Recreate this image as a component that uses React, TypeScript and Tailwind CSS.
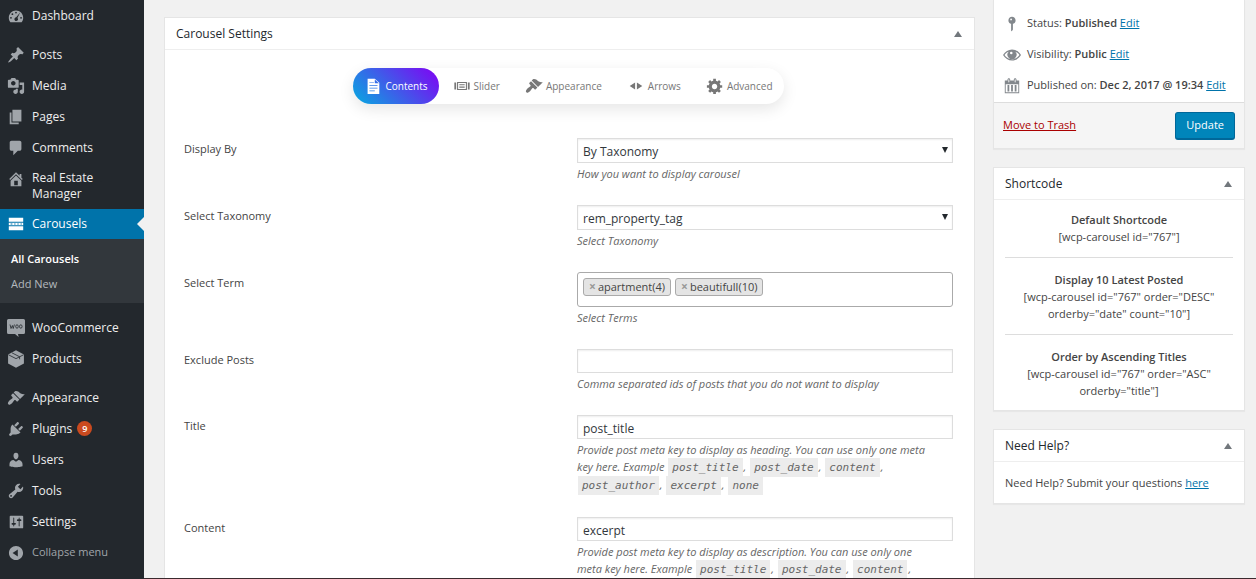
import type { ReactNode } from "react";

type IconProps = { className?: string; children: ReactNode };

function Icon({ className = "size-[18px]", children }: IconProps) {
  return (
    <svg viewBox="0 0 20 20" fill="currentColor" fillRule="evenodd" aria-hidden="true" className={`shrink-0 ${className}`}>
      {children}
    </svg>
  );
}

const icons = {
  dashboard: (
    <path d="M3.76 17h12.48c1.1-1.37 1.76-3.11 1.76-5 0-4.42-3.58-8-8-8s-8 3.58-8 8c0 1.89.66 3.63 1.76 5zM10 5.2a1 1 0 1 1 0 2 1 1 0 0 1 0-2zM6 7a1 1 0 1 1 0 2 1 1 0 0 1 0-2zM14.8 5.9l-3.2 6.4c.7.6.9 1.7.3 2.5-.7.9-2 1.1-2.9.4s-1-2-.3-2.9c.4-.5.9-.7 1.5-.8zM4.4 11a1 1 0 1 1 0 2 1 1 0 0 1 0-2zM15.6 11a1 1 0 1 1 0 2 1 1 0 0 1 0-2z" />
  ),
  post: (
    <path d="M10.44 3.02l1.82-1.82 6.36 6.35-1.83 1.82c-1.05-.68-2.48-.57-3.41.36l-.75.75c-.92.93-1.04 2.35-.35 3.41l-1.83 1.82-2.41-2.41-2.8 2.79c-.42.42-3.38 2.71-3.8 2.29s1.86-3.39 2.28-3.81l2.79-2.79L4.1 9.36l1.83-1.82c1.05.69 2.48.57 3.4-.36l.75-.75c.93-.92 1.05-2.35.36-3.41z" />
  ),
  media: (
    <path d="M13 11V4c0-.55-.45-1-1-1h-1.67L9 1H5L3.67 3H2c-.55 0-1 .45-1 1v7c0 .55.45 1 1 1h10c.55 0 1-.45 1-1zM7 4.5c1.38 0 2.5 1.12 2.5 2.5S8.38 9.5 7 9.5 4.5 8.38 4.5 7 5.62 4.5 7 4.5zM14 6h5v10.5c0 1.38-1.12 2.5-2.5 2.5S14 17.88 14 16.5s1.12-2.5 2.5-2.5c.17 0 .34.02.5.05V9h-3V6zm-4 8.05V13h2v3.5c0 1.38-1.12 2.5-2.5 2.5S7 17.88 7 16.5 8.12 14 9.5 14c.17 0 .34.02.5.05z" />
  ),
  page: <path d="M6 15V2h10v13H6zm-1 1h8v2H3V5h2v11z" />,
  comments: (
    <path d="M5 2h9c1.1 0 2 .9 2 2v7c0 1.1-.9 2-2 2h-2l-5 5v-5H5c-1.1 0-2-.9-2-2V4c0-1.1.9-2 2-2z" />
  ),
  home: (
    <path d="M16 8.5l1.53 1.53-1.06 1.06L10 4.6l-6.47 6.49-1.06-1.06L10 2.5l4 4v-2h2v4zm-6-2.46l6 5.99V18H4v-5.97zM12 17v-5H8v5h4z" />
  ),
  carousels: (
    <path d="M2 3h16v4.500H2zM2 8.500h16v3H2zM4 9.500v1h2v-1zM8 9.500v1h1.500v-1zM11.500 9.500v1H13v-1zM15 9.500v1h1.500v-1zM2 12.500h16V17H2z" />
  ),
  products: (
    <>
      <path d="M10 .4l8.800 4.600v10L10 19.800 1.200 15V5z" />
      <path d="M1.600 5.300L10 9.600l8.400-4.300M5.600 3.200l8.400 4.300v2.800" fill="none" stroke="#23282d" strokeWidth="0.900" />
    </>
  ),
  appearance: (
    <path d="M14.48 11.06L7.41 3.99l1.5-1.5c.5-.56 2.3-.47 3.51.32 1.21.8 1.43 1.28 2.91 2.1 1.18.64 2.45 1.26 4.45.85zm-.71.71L6.7 4.7 4.93 6.47c-.39.39-.39 1.02 0 1.41l1.06 1.06c.39.39.39 1.03 0 1.42-.6.6-1.43 1.11-2.21 1.69-.35.26-.7.53-1.01.84C1.43 14.23.4 16.08 1.4 17.07c.99 1 2.84-.03 4.18-1.36.31-.31.58-.66.85-1.02.57-.78 1.08-1.61 1.69-2.21.39-.39 1.02-.39 1.41 0l1.06 1.06c.39.39 1.02.39 1.41 0z" />
  ),
  plugins: (
    <path d="M13.11 4.36L9.87 7.6 8 5.73l3.24-3.24c.35-.34 1.05-.2 1.56.32.52.51.66 1.21.31 1.55zm-8 1.77l.91-1.12 9.01 9.01-1.19.84c-.71.71-2.63 1.16-3.82 1.16H6.14L4.9 17.26c-.59.59-1.54.59-2.12 0-.59-.58-.59-1.53 0-2.12l1.24-1.24v-3.88c0-1.13.4-3.19 1.09-3.89zm7.26 3.97l3.24-3.24c.34-.35 1.04-.21 1.55.31.52.51.66 1.21.31 1.55l-3.24 3.25z" />
  ),
  users: (
    <path d="M10 9.25c-2.27 0-2.73-3.44-2.73-3.44C7 4.02 7.82 2 9.97 2c2.16 0 2.98 2.02 2.71 3.81 0 0-.41 3.44-2.68 3.44zm0 2.57L12.72 10c2.39 0 4.52 2.33 4.52 4.53v2.49s-3.65 1.13-7.24 1.13c-3.65 0-7.24-1.13-7.24-1.13v-2.49c0-2.25 1.94-4.48 4.47-4.48z" />
  ),
  tools: (
    <path d="M16.68 9.77c-1.34 1.34-3.3 1.67-4.95.99l-5.41 6.52c-.99.99-2.59.99-3.58 0s-.99-2.59 0-3.57l6.52-5.42c-.68-1.65-.35-3.61.99-4.95 1.28-1.28 3.12-1.62 4.72-1.06l-2.89 2.89 2.82 2.82 2.86-2.87c.53 1.58.18 3.39-1.08 4.65zM3.81 16.21c.4.39 1.04.39 1.43 0 .4-.4.4-1.04 0-1.43-.39-.4-1.03-.4-1.43 0-.39.39-.39 1.03 0 1.43z" />
  ),
  settings: (
    <path d="M18 16V4c0-.55-.45-1-1-1H4c-.55 0-1 .45-1 1v12c0 .55.45 1 1 1h13c.55 0 1-.45 1-1zM8 11h1c.55 0 1 .45 1 1s-.45 1-1 1H8v1.5c0 .28-.22.5-.5.5s-.5-.22-.5-.5V13H6c-.55 0-1-.45-1-1s.45-1 1-1h1V5.5c0-.28.22-.5.5-.5s.5.22.5.5V11zm5-2h-1c-.55 0-1-.45-1-1s.45-1 1-1h1V5.5c0-.28.22-.5.5-.5s.5.22.5.5V7h1c.55 0 1 .45 1 1s-.45 1-1 1h-1v5.5c0 .28-.22.5-.5.5s-.5-.22-.5-.5V9z" />
  ),
  collapse: (
    <path d="M10 2.16c4.33 0 7.84 3.51 7.84 7.84s-3.51 7.84-7.84 7.84S2.16 14.33 2.16 10 5.71 2.16 10 2.16zm2 11.72V6.12L6.18 9.97z" />
  ),
  gear: (
    <path d="M18 12h-2.18c-.17.7-.44 1.35-.81 1.93l1.54 1.54-2.1 2.1-1.54-1.54c-.58.36-1.23.63-1.91.79V19H8v-2.18c-.68-.16-1.33-.43-1.91-.79l-1.54 1.54-2.12-2.12 1.54-1.54c-.36-.58-.63-1.23-.79-1.91H1V9.03h2.17c.16-.7.44-1.35.8-1.94L2.43 5.55l2.1-2.1 1.54 1.54c.58-.37 1.24-.64 1.93-.81V2h3v2.18c.68.16 1.33.43 1.91.79l1.54-1.54 2.12 2.12-1.54 1.54c.36.59.64 1.24.8 1.94H18V12zm-8.5 1.5c1.66 0 3-1.34 3-3s-1.34-3-3-3-3 1.34-3 3 1.34 3 3 3z" />
  ),
  arrows: <path d="M3 10.03L9 6v8zM11 6l6 4.03L11 14V6z" />,
  slider: (
    <path d="M1.500 6h2v8h-2zM16.500 6h2v8h-2zM4.500 5.500h11v9h-11zM5.700 6.700v6.600h8.600V6.700zM7 8h6v1.200H7zM7 10.600h6V12H7z" />
  ),
  document: (
    <path d="M4 2h8l5 4.500V19H4zM12 2.800V7h4.500zM6 6v.8h5V6zM6 9v.8h9V9zM6 12v.8h9V12zM6 15v.8h6V15z" />
  ),
  pin: (
    <path d="M14 6c0 1.860-1.280 3.410-3 3.860V16c0 1-2 2-2 2V9.860c-1.720-.45-3-2-3-3.860 0-2.210 1.790-4 4-4s4 1.790 4 4zM8 5c0 .55.45 1 1 1s1-.45 1-1-.45-1-1-1-1 .45-1 1z" />
  ),
  eye: (
    <path d="M10 3.800c4 0 7.700 2.300 10 6.200-2.300 3.900-6 6.200-10 6.200S2.300 13.900 0 10c2.300-3.900 6-6.200 10-6.200zM6.300 6.300C4.300 7 2.700 8.300 1.700 10c1.800 2.900 4.900 4.700 8.300 4.700s6.500-1.800 8.300-4.700c-1-1.700-2.600-3-4.600-3.700a5 5 0 1 1-7.400 0zM9.200 6.300a1.400 1.400 0 1 0 0 2.800 1.400 1.400 0 0 0 0-2.800z" />
  ),
  calendar: (
    <path d="M15 4h3v14H2V4h3V3c0-.83.67-1.500 1.500-1.500S8 2.170 8 3v1h4V3c0-.83.67-1.500 1.500-1.500S15 2.170 15 3v1zM6 3v2.500c0 .28.22.5.5.5s.5-.22.5-.5V3c0-.28-.22-.5-.5-.5S6 2.720 6 3zm7 0v2.500c0 .28.22.5.5.5s.5-.22.5-.5V3c0-.28-.22-.5-.5-.5s-.5.22-.5.5zm4 14V8H3v9h14zM7 16V9H5v7h2zm4 0V9H9v7h2zm4 0V9h-2v7h2z" />
  ),
};

function WooBadge() {
  return (
    <svg viewBox="0 0 18 18" aria-hidden="true" className="size-[18px] shrink-0">
      <path
        d="M1.500 0h15A1.500 1.500 0 0 1 18 1.500v12a1.500 1.500 0 0 1-1.500 1.500H11l.6 3-3.600-3H1.500A1.500 1.500 0 0 1 0 13.500v-12A1.500 1.500 0 0 1 1.500 0z"
        fill="#9ea3a8"
      />
      <path d="M3 5.500l1 4 1.400-3 .8 3L7.400 5.500" fill="none" stroke="#23282d" strokeWidth="0.800" />
      <ellipse cx="10" cy="7.500" rx="1.300" ry="1.700" fill="none" stroke="#23282d" strokeWidth="0.800" />
      <ellipse cx="13.800" cy="7.500" rx="1.300" ry="1.700" fill="none" stroke="#23282d" strokeWidth="0.800" />
    </svg>
  );
}

type MenuItemProps = { icon: ReactNode; label: string; badge?: string; tall?: boolean };

function MenuItem({ icon, label, badge, tall }: MenuItemProps) {
  const height = tall ? "h-[46px] items-start pt-[7px]" : "h-[31px] items-center";
  return (
    <a href="#" className={`flex gap-[7px] pl-[7px] pr-4 text-xs leading-4 text-[#eee] ${height}`}>
      <span className="text-[#a0a5aa]">{icon}</span>
      <span>{label}</span>
      {badge && (
        <span className="-ml-[2px] flex size-[15px] items-center justify-center rounded-full bg-[#ca4a1f] text-[9px] font-semibold text-white">
          {badge}
        </span>
      )}
    </a>
  );
}

function Sidebar() {
  return (
    <nav className="flex w-36 shrink-0 flex-col bg-[#23282d]" aria-label="Admin menu">
      <MenuItem icon={<Icon>{icons.dashboard}</Icon>} label="Dashboard" />
      <div className="mt-2">
        <MenuItem icon={<Icon>{icons.post}</Icon>} label="Posts" />
        <MenuItem icon={<Icon>{icons.media}</Icon>} label="Media" />
        <MenuItem icon={<Icon>{icons.page}</Icon>} label="Pages" />
        <MenuItem icon={<Icon>{icons.comments}</Icon>} label="Comments" />
        <MenuItem icon={<Icon>{icons.home}</Icon>} label="Real Estate Manager" tall />
      </div>
      <a href="#" className="flex h-[30px] items-center gap-[7px] bg-[#0073aa] pl-[7px] text-xs leading-4 text-white">
        <Icon>{icons.carousels}</Icon>
        <span>Carousels</span>
        <span className="ml-auto border-y-[7px] border-r-[7px] border-y-transparent border-r-[#f1f1f1]" />
      </a>
      <div className="flex flex-col bg-[#32373c] px-[11px] py-[7px] text-[11px] leading-[25px]">
        <a href="#" className="font-semibold text-white">
          All Carousels
        </a>
        <a href="#" className="text-[#b4b9be]">
          Add New
        </a>
      </div>
      <div className="mt-[9px]">
        <MenuItem icon={<WooBadge />} label="WooCommerce" />
        <MenuItem icon={<Icon>{icons.products}</Icon>} label="Products" />
      </div>
      <div className="mt-2">
        <MenuItem icon={<Icon>{icons.appearance}</Icon>} label="Appearance" />
        <MenuItem icon={<Icon>{icons.plugins}</Icon>} label="Plugins" badge="9" />
        <MenuItem icon={<Icon>{icons.users}</Icon>} label="Users" />
        <MenuItem icon={<Icon>{icons.tools}</Icon>} label="Tools" />
        <MenuItem icon={<Icon>{icons.settings}</Icon>} label="Settings" />
      </div>
      <button type="button" className="flex h-[31px] items-center gap-[7px] pl-[7px] text-[11px] text-[#a0a5aa]">
        <Icon>{icons.collapse}</Icon>
        <span>Collapse menu</span>
      </button>
    </nav>
  );
}

function Panel({ title, children }: { title: string; children: ReactNode }) {
  return (
    <section className="border border-[#e5e5e5] bg-white shadow-[0_1px_1px_rgba(0,0,0,0.04)]">
      <header className="flex h-8 items-center justify-between border-b border-[#eee] pl-[11px] pr-3">
        <h2 className="text-xs font-medium text-[#23282d]">{title}</h2>
        <button type="button" aria-label={`Toggle ${title}`}>
          <span className="block border-x-4 border-b-[6px] border-x-transparent border-b-[#72777c]" />
        </button>
      </header>
      {children}
    </section>
  );
}

const tabs = [
  { label: "Slider", icon: icons.slider },
  { label: "Appearance", icon: icons.appearance },
  { label: "Arrows", icon: icons.arrows },
  { label: "Advanced", icon: icons.gear },
];

function Tabs() {
  return (
    <div role="tablist" className="flex h-9 rounded-full bg-white text-[10px] text-[#777] shadow-[0_5px_15px_rgba(0,0,0,0.1)]">
      <button
        type="button"
        role="tab"
        aria-selected="true"
        className="flex items-center gap-[3px] rounded-full bg-linear-45/srgb from-[#05abe0] to-[#8200f4] px-[11px] text-white"
      >
        <Icon>{icons.document}</Icon>
        Contents
      </button>
      {tabs.map((tab) => (
        <button key={tab.label} type="button" role="tab" aria-selected="false" className="flex items-center gap-[3px] pl-[14px] pr-[11px]">
          <Icon>{tab.icon}</Icon>
          {tab.label}
        </button>
      ))}
    </div>
  );
}

function Field({ id, label, help, children }: { id: string; label: string; help: ReactNode; children: ReactNode }) {
  return (
    <div className="grid grid-cols-[minmax(0,393fr)_minmax(0,376fr)]">
      <label htmlFor={id} className="pt-[2px] leading-[17px] text-[#444]">
        {label}
      </label>
      <div>
        {children}
        <p className="mt-[2px] leading-[17px] text-[#666] italic">{help}</p>
      </div>
    </div>
  );
}

function Dropdown({ id, value }: { id: string; value: string }) {
  return (
    <div className="relative">
      <select
        id={id}
        defaultValue={value}
        className="block h-[25px] w-full appearance-none border border-[#ddd] bg-white px-[5px] pt-[2px] text-xs text-[#32373c] shadow-[inset_0_1px_2px_rgba(0,0,0,0.07)]"
      >
        <option>{value}</option>
      </select>
      <span className="pointer-events-none absolute top-[9px] right-[5px] border-x-[3px] border-t-[6px] border-x-transparent border-t-[#23282d]" />
    </div>
  );
}

function TextBox({ id, value = "" }: { id: string; value?: string }) {
  return (
    <input
      id={id}
      type="text"
      defaultValue={value}
      className="block h-6 w-full border border-[#ddd] bg-white px-[5px] pt-[2px] text-xs text-[#32373c] shadow-[inset_0_1px_2px_rgba(0,0,0,0.07)]"
    />
  );
}

function Tag({ label }: { label: string }) {
  return (
    <span className="flex h-[18px] items-center gap-[2px] rounded-[3px] border border-[#aaa] bg-[#e4e4e4] px-[5px] text-[#444]">
      <button type="button" aria-label={`Remove ${label}`} className="text-xs font-bold text-[#999]">
        ×
      </button>
      {label}
    </span>
  );
}

const metaKeys = ["post_title", "post_date", "content", "post_author", "excerpt", "none"];

function MetaHelp({ intro }: { intro: string }) {
  return (
    <>
      {intro} Example{" "}
      {metaKeys.map((key, i) => (
        <span key={key}>
          <code className="mx-px bg-[#ececec] px-1 py-[3px] font-['DejaVu_Sans_Mono',monospace] text-[11px]">{key}</code>
          {i < metaKeys.length - 1 && ", "}
        </span>
      ))}
    </>
  );
}

function EditLink({ children = "Edit" }: { children?: ReactNode }) {
  return (
    <a href="#" className="text-[#0073aa] underline">
      {children}
    </a>
  );
}

function StatusRow({ icon, label, value }: { icon: ReactNode; label: string; value: string }) {
  return (
    <p className="flex h-[31px] items-center gap-[6px]">
      <span className="text-[#82878c]">
        <Icon>{icon}</Icon>
      </span>
      <span className="whitespace-nowrap">
        {label}: <strong className="font-semibold">{value}</strong> <EditLink />
      </span>
    </p>
  );
}

const shortcodes = [
  { title: "Default Shortcode", code: '[wcp-carousel id="767"]' },
  { title: "Display 10 Latest Posted", code: '[wcp-carousel id="767" order="DESC" orderby="date" count="10"]' },
  { title: "Order by Ascending Titles", code: '[wcp-carousel id="767" order="ASC" orderby="title"]' },
];

export default function App() {
  return (
    <div className="flex h-screen overflow-hidden bg-[#f1f1f1] font-['Open_Sans','Noto_Sans',sans-serif] text-[11px] text-[#444]">
      <Sidebar />
      <div className="flex flex-1 gap-[18px] border-b border-[#3a2a2e] pr-[11px] pl-5">
        <main className="min-h-0 flex-1 overflow-hidden pt-[17px]">
          <Panel title="Carousel Settings">
            <div className="pt-[18px] pr-[21px] pl-[19px]">
              <div className="flex justify-center">
                <Tabs />
              </div>
              <form className="mt-[34px] flex flex-col gap-[23px] pb-6">
                <Field id="display-by" label="Display By" help="How you want to display carousel">
                  <Dropdown id="display-by" value="By Taxonomy" />
                </Field>
                <Field id="taxonomy" label="Select Taxonomy" help="Select Taxonomy">
                  <Dropdown id="taxonomy" value="rem_property_tag" />
                </Field>
                <Field id="term" label="Select Term" help="Select Terms">
                  <div className="flex h-[35px] items-start gap-1 rounded-[3px] border border-[#aaa] px-[5px] pt-[5px]">
                    <Tag label="apartment(4)" />
                    <Tag label="beautifull(10)" />
                    <input id="term" type="text" className="h-[18px] min-w-0 flex-1 outline-none" />
                  </div>
                </Field>
                <Field id="exclude" label="Exclude Posts" help="Comma separated ids of posts that you do not want to display">
                  <TextBox id="exclude" />
                </Field>
                <Field
                  id="title"
                  label="Title"
                  help={<MetaHelp intro={"Provide post meta key to display as heading. You can use only one meta key\u00a0here."} />}
                >
                  <TextBox id="title" value="post_title" />
                </Field>
                <Field
                  id="content"
                  label="Content"
                  help={
                    <MetaHelp intro={"Provide post meta key to display as description. You can use only one meta\u00a0key\u00a0here."} />
                  }
                >
                  <TextBox id="content" value="excerpt" />
                </Field>
              </form>
            </div>
          </Panel>
        </main>
        <aside className="flex w-[252px] shrink-0 flex-col gap-[18px]">
          <section className="border border-t-0 border-[#e5e5e5] bg-white shadow-[0_1px_1px_rgba(0,0,0,0.04)]">
            <div className="px-[9px] pt-2 pb-px">
              <StatusRow icon={icons.pin} label="Status" value="Published" />
              <StatusRow icon={icons.eye} label="Visibility" value="Public" />
              <StatusRow icon={icons.calendar} label="Published on" value="Dec 2, 2017 @ 19:34" />
            </div>
            <div className="flex h-[46px] items-center justify-between border-t border-[#ddd] bg-[#f5f5f5] px-[9px]">
              <a href="#" className="text-[#a00] underline">
                Move to Trash
              </a>
              <button
                type="button"
                className="h-7 rounded-[3px] border border-b-2 border-[#006799] bg-[#0085ba] px-[10px] text-white"
              >
                Update
              </button>
            </div>
          </section>
          <Panel title="Shortcode">
            <div className="px-[11px] py-[11px] text-center leading-[17px]">
              {shortcodes.map((item) => (
                <div key={item.title} className="border-[#ddd] not-first:mt-3 not-first:border-t not-first:pt-[13px]">
                  <p className="font-semibold">{item.title}</p>
                  <p>{item.code}</p>
                </div>
              ))}
            </div>
          </Panel>
          <Panel title="Need Help?">
            <p className="px-[11px] py-3 leading-[17px]">
              Need Help? Submit your questions <EditLink>here</EditLink>
            </p>
          </Panel>
        </aside>
      </div>
    </div>
  );
}
